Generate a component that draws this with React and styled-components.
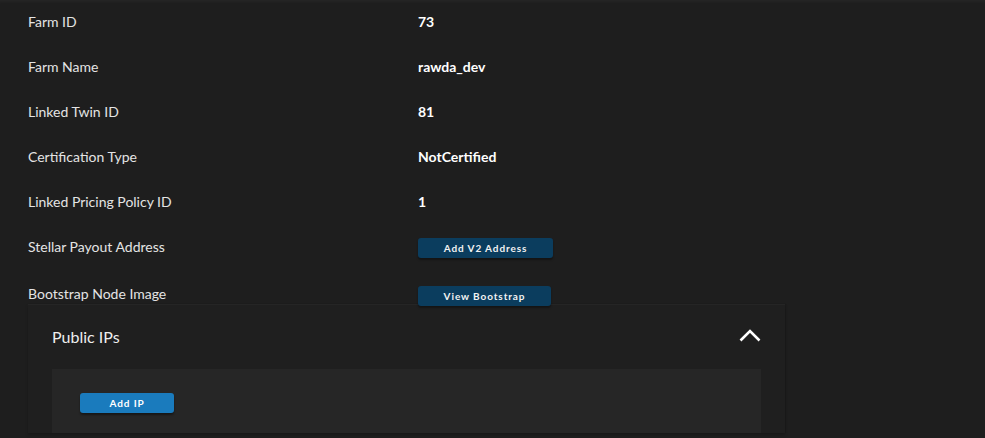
import styled, { createGlobalStyle } from "styled-components";

const GlobalStyle = createGlobalStyle`
  html, body {
    margin: 0;
    padding: 0;
    background-color: #1e1e1e;
  }
  body {
    font-family: Lato, "Open Sans", sans-serif;
    color: #e6e6e6;
  }
`;

const details = [
  { label: "Farm ID", value: "73" },
  { label: "Farm Name", value: "rawda_dev" },
  { label: "Linked Twin ID", value: "81" },
  { label: "Certification Type", value: "NotCertified" },
  { label: "Linked Pricing Policy ID", value: "1" },
];

export default function App() {
  return (
    <>
      <GlobalStyle />
      <Page>
        <DetailsList>
          {details.map((row) => (
            <Row key={row.label}>
              <Label>{row.label}</Label>
              <Value>{row.value}</Value>
            </Row>
          ))}
          <Row>
            <Label>Stellar Payout Address</Label>
            <div>
              <DarkButton>Add V2 Address</DarkButton>
            </div>
          </Row>
          <Row $tight>
            <Label>Bootstrap Node Image</Label>
            <div>
              <DarkButton $width="133px">View Bootstrap</DarkButton>
            </div>
          </Row>
        </DetailsList>

        <Panel>
          <PanelHeader>
            <PanelTitle>Public IPs</PanelTitle>
            <Chevron viewBox="0 0 22 13" aria-hidden="true">
              <polyline points="1.5,11.5 11,2 20.5,11.5" />
            </Chevron>
          </PanelHeader>
          <PanelContent>
            <BlueButton>Add IP</BlueButton>
          </PanelContent>
        </Panel>
      </Page>
    </>
  );
}

const Page = styled.div`
  width: 100%;
  height: 438px;
  overflow: hidden;
  padding: 0 28px;
  box-sizing: border-box;
  background-color: #1e1e1e;
  box-shadow: inset 0 4px 4px -3px rgba(255, 255, 255, 0.05);
`;

const DetailsList = styled.div`
  display: flex;
  flex-direction: column;
`;

const Row = styled.div`
  display: grid;
  grid-template-columns: 390px 1fr;
  align-items: ${(p) => (p.$tight ? "start" : "center")};
  height: ${(p) => (p.$tight ? "34px" : "45px")};
  padding: ${(p) => (p.$tight ? "14px 0 0" : "0 0 2px")};
  box-sizing: ${(p) => (p.$tight ? "content-box" : "border-box")};
  margin-bottom: ${(p) => (p.$tight ? "-14px" : "0")};
  position: relative;
  z-index: 1;
`;

const Label = styled.span`
  font-size: 14px;
  line-height: 20px;
  color: #e4e4e4;
`;

const Value = styled.span`
  font-size: 14px;
  line-height: 20px;
  font-weight: 700;
  color: #ffffff;
`;

const DarkButton = styled.button`
  width: ${(p) => p.$width || "135px"};
  height: 20px;
  padding: 0;
  border: none;
  border-radius: 3px;
  background-color: #0b3d5e;
  color: #f2f2f2;
  font-family: Lato, sans-serif;
  font-size: 10px;
  font-weight: 700;
  letter-spacing: 0.09em;
  box-shadow: 0 2px 2px rgba(0, 0, 0, 0.35);
  cursor: pointer;
`;

const Panel = styled.section`
  width: 757px;
  background-color: #1f1f1f;
  border-top: 1px solid #252525;
  box-shadow: 0 2px 3px rgba(0, 0, 0, 0.2), 1px 0 1px rgba(0, 0, 0, 0.08);
`;

const PanelHeader = styled.div`
  height: 64px;
  padding: 0 24px;
  display: flex;
  align-items: center;
  justify-content: space-between;
`;

const PanelTitle = styled.h3`
  margin: -2px 0 0;
  font-size: 16px;
  font-weight: 400;
  color: #eeeeee;
`;

const Chevron = styled.svg`
  width: 22px;
  height: 13px;
  margin-top: -4px;
  fill: none;
  stroke: #ffffff;
  stroke-width: 2.6;
`;

const PanelContent = styled.div`
  margin: 0 24px;
  height: 64px;
  padding: 22px 28px 0;
  box-sizing: border-box;
  background-color: #262626;
`;

const BlueButton = styled.button`
  width: 94px;
  height: 20px;
  padding: 0;
  border: none;
  border-radius: 3px;
  background-color: #1a7bbd;
  color: #ffffff;
  font-family: Lato, sans-serif;
  font-size: 10px;
  font-weight: 700;
  letter-spacing: 0.09em;
  box-shadow: 0 2px 2px rgba(0, 0, 0, 0.4);
  cursor: pointer;
`;
